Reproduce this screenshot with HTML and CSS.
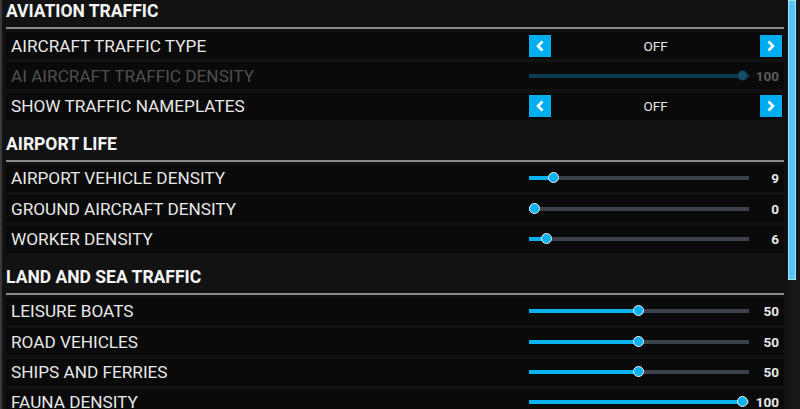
FILE: index.html
```html
<!DOCTYPE html>
<html lang="en">
<head>
  <meta charset="UTF-8" />
  <title>Traffic Options</title>
  <link rel="stylesheet" href="styles.css">
</head>
<body>

  <div class="painel">
    <div class="lista">

      <div class="secao primeira">
        <div class="titulo-secao">AVIATION TRAFFIC</div>
        <div class="linhas">
          <div class="linha">
            <span class="rotulo">AIRCRAFT TRAFFIC TYPE</span>
            <div class="seletor">
              <button class="seta"><svg viewBox="0 0 22 22"><path d="M13.5 6.5 L9 11 L13.5 15.5" /></svg></button>
              <span class="opcao">OFF</span>
              <button class="seta"><svg viewBox="0 0 22 22"><path d="M8.5 6.5 L13 11 L8.5 15.5" /></svg></button>
            </div>
          </div>
          <div class="linha desativada">
            <span class="rotulo">AI AIRCRAFT TRAFFIC DENSITY</span>
            <div class="controle">
              <div class="trilho" style="--v:100"><div class="preenchido"></div><div class="pino"></div></div>
              <span class="valor">100</span>
            </div>
          </div>
          <div class="linha">
            <span class="rotulo">SHOW TRAFFIC NAMEPLATES</span>
            <div class="seletor">
              <button class="seta"><svg viewBox="0 0 22 22"><path d="M13.5 6.5 L9 11 L13.5 15.5" /></svg></button>
              <span class="opcao">OFF</span>
              <button class="seta"><svg viewBox="0 0 22 22"><path d="M8.5 6.5 L13 11 L8.5 15.5" /></svg></button>
            </div>
          </div>
        </div>
      </div>

      <div class="secao">
        <div class="titulo-secao">AIRPORT LIFE</div>
        <div class="linhas">
          <div class="linha">
            <span class="rotulo">AIRPORT VEHICLE DENSITY</span>
            <div class="controle">
              <div class="trilho" style="--v:9"><div class="preenchido"></div><div class="pino"></div></div>
              <span class="valor">9</span>
            </div>
          </div>
          <div class="linha">
            <span class="rotulo">GROUND AIRCRAFT DENSITY</span>
            <div class="controle">
              <div class="trilho" style="--v:0"><div class="preenchido"></div><div class="pino"></div></div>
              <span class="valor">0</span>
            </div>
          </div>
          <div class="linha">
            <span class="rotulo">WORKER DENSITY</span>
            <div class="controle">
              <div class="trilho" style="--v:6"><div class="preenchido"></div><div class="pino"></div></div>
              <span class="valor">6</span>
            </div>
          </div>
        </div>
      </div>

      <div class="secao">
        <div class="titulo-secao">LAND AND SEA TRAFFIC</div>
        <div class="linhas">
          <div class="linha">
            <span class="rotulo">LEISURE BOATS</span>
            <div class="controle">
              <div class="trilho" style="--v:50"><div class="preenchido"></div><div class="pino"></div></div>
              <span class="valor">50</span>
            </div>
          </div>
          <div class="linha">
            <span class="rotulo">ROAD VEHICLES</span>
            <div class="controle">
              <div class="trilho" style="--v:50"><div class="preenchido"></div><div class="pino"></div></div>
              <span class="valor">50</span>
            </div>
          </div>
          <div class="linha">
            <span class="rotulo">SHIPS AND FERRIES</span>
            <div class="controle">
              <div class="trilho" style="--v:50"><div class="preenchido"></div><div class="pino"></div></div>
              <span class="valor">50</span>
            </div>
          </div>
          <div class="linha">
            <span class="rotulo">FAUNA DENSITY</span>
            <div class="controle">
              <div class="trilho" style="--v:100"><div class="preenchido"></div><div class="pino"></div></div>
              <span class="valor">100</span>
            </div>
          </div>
        </div>
      </div>

    </div>

    <div class="rolagem">
      <div class="barra"></div>
    </div>
  </div>

</body>
</html>
```

FILE: styles.css
```css
body {
  margin: 0;
  background-color: #121212;
  font-family: Roboto, "Liberation Sans", sans-serif;
  color: #e8e8e8;
}

.painel {
  display: flex;
  height: 409px;
  overflow: hidden;
}

.lista {
  width: 778px;
  padding: 0 2px 0 4px;
  border-left: 2px solid #3a3a3a;
}

.secao {
  margin-bottom: 10.33px;
}

.secao.primeira {
  margin-top: -3px;
}

.titulo-secao {
  padding: 3px 0 5px;
  line-height: 22px;
  font-size: 17.5px;
  font-weight: bold;
  color: #f4f4f4;
  border-bottom: 2px solid #8a8a8a;
}

.linhas {
  display: flex;
  flex-direction: column;
  gap: 3.33px;
  margin-top: 3px;
}

.linha {
  display: flex;
  align-items: center;
  height: 27px;
  padding-left: 5px;
  background-color: #0a0a0a;
}

.rotulo {
  flex: 1;
  font-size: 17.2px;
  color: #e8e8e8;
}

/* seletor com setas */
.seletor {
  display: flex;
  align-items: center;
  width: 253px;
  margin-right: 2px;
}

.seta {
  width: 22px;
  height: 22px;
  padding: 0;
  border: none;
  background-color: #00aeef;
  display: flex;
}

.seta svg {
  width: 22px;
  height: 22px;
}

.seta path {
  fill: none;
  stroke: #fff;
  stroke-width: 2.6;
}

.opcao {
  flex: 1;
  text-align: center;
  font-size: 13.5px;
  color: #e6e6e6;
}

/* slider */
.controle {
  display: flex;
  align-items: center;
  width: 253px;
  margin-right: 2px;
}

.trilho {
  position: relative;
  width: 220px;
  height: 4px;
  background-color: #3b424a;
}

.preenchido {
  height: 4px;
  width: calc(6px + var(--v) * 2.08px);
  background-color: #0ab2f2;
}

.pino {
  position: absolute;
  top: -4px;
  left: calc(var(--v) * 2.08px);
  width: 9px;
  height: 9px;
  border: 1.5px solid #f2f2f2;
  border-radius: 50%;
  background-color: #0ab2f2;
}

.valor {
  flex: 1;
  text-align: right;
  padding-right: 3px;
  font-size: 13.5px;
  font-weight: bold;
  color: #e8e8e8;
}

.desativada .rotulo {
  color: #505050;
}

.desativada .trilho,
.desativada .preenchido {
  background-color: #0d3c52;
}

.desativada .pino {
  background-color: #174e69;
  border-color: #0b2230;
}

.desativada .valor {
  color: #5a5a5a;
}

/* barra de rolagem */
.rolagem {
  width: 12px;
  margin-left: 2px;
  background-color: #171717;
}

.barra {
  width: 6px;
  height: 278px;
  border: 1px solid #a6e3ff;
  background-color: #55c6f7;
}
```
